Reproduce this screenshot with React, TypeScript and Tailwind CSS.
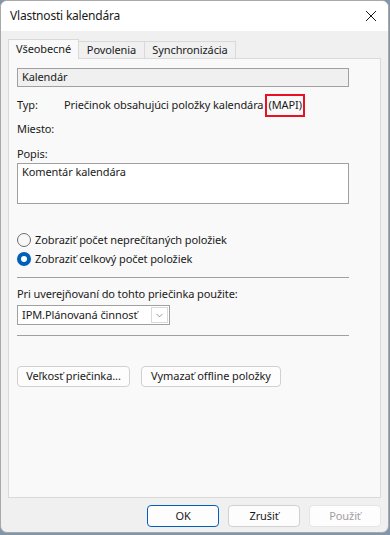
import { ChevronDown } from 'lucide-react'

const font = { fontFamily: '"Segoe UI", "Noto Sans", sans-serif' }

function Radio({ checked, label }: { checked?: boolean; label: string }) {
  return (
    <div className="flex items-center h-[18px]">
      {checked ? (
        <div className="w-[14px] h-[14px] rounded-full bg-[#005fb8] flex items-center justify-center">
          <div className="w-[6px] h-[6px] rounded-full bg-white" />
        </div>
      ) : (
        <div className="w-[14px] h-[14px] rounded-full border border-[#6e6e6e] bg-[#f7f7f7]" />
      )}
      <span className="ml-[4px]">{label}</span>
    </div>
  )
}

function Btn({ children, className = '' }: { children: React.ReactNode; className?: string }) {
  return (
    <div className={`h-[21px] flex items-center justify-center rounded-[4px] border bg-[#fdfdfd] ${className}`}>
      {children}
    </div>
  )
}

export default function App() {
  return (
    <div className="w-[390px] h-[535px] bg-[#8196ab] overflow-hidden text-[11px] tracking-[-0.1px] text-[#1a1a1a]" style={font}>
      <div className="w-[389px] h-[533px] rounded-[7px] border border-[#a8a8a8] bg-[#f0f0f0] overflow-hidden flex flex-col">
        {/* title bar */}
        <div className="h-[30px] bg-white flex items-center justify-between pl-[9px] pr-[10px] shrink-0">
          <span className="text-[12px] tracking-[-0.2px] text-[#1a1a1a]">Vlastnosti kalendára</span>
          <svg width="12" height="12" viewBox="0 0 12 12" className="mr-[1px]">
            <path d="M1 1 L11 11 M11 1 L1 11" stroke="#1a1a1a" strokeWidth="1" />
          </svg>
        </div>

        {/* tabs */}
        <div className="flex items-end px-[7px] mt-[7px] h-[20px] relative z-10">
          <div className="h-[20px] w-[71px] border border-b-0 border-[#d9d9d9] bg-[#f9f9f9] flex items-center pl-[7px] -mb-px pb-[1px]">
            Všeobecné
          </div>
          <div className="h-[17px] w-[66px] border border-b-0 border-l-0 border-[#d9d9d9] bg-[#f0f0f0] flex items-center justify-center">
            Povolenia
          </div>
          <div className="h-[17px] w-[91px] border border-b-0 border-l-0 border-[#d9d9d9] bg-[#f0f0f0] flex items-center justify-center">
            Synchronizácia
          </div>
        </div>

        {/* panel */}
        <div className="mx-[7px] h-[440px] border border-[#d9d9d9] bg-[#f9f9f9] px-[8px] pt-[9px] flex flex-col">
          <div className="w-[332px] h-[19px] border border-[#a0a0a0] bg-[#f0f0f0] flex items-center pl-[4px]">
            Kalendár
          </div>

          <div className="flex items-center mt-[7px] h-[23px]">
            <span className="w-[47px]">Typ:</span>
            <span>Priečinok obsahujúci položky kalendára</span>
            <span className="ml-[2px] border-2 border-[#e81123] px-[1px] h-[23px] flex items-center">(MAPI)</span>
          </div>

          <div className="mt-[3px] h-[18px] flex items-center">Miesto:</div>

          <div className="mt-[7px] h-[18px] flex items-center">Popis:</div>
          <div className="w-[332px] h-[41px] border border-[#a0a0a0] bg-white pl-[4px]">
            Komentár kalendára
          </div>

          <div className="mt-[27px] flex flex-col gap-[1px]">
            <Radio label="Zobraziť počet neprečítaných položiek" />
            <Radio checked label="Zobraziť celkový počet položiek" />
          </div>

          <div className="mt-[9px] w-[332px] h-px bg-[#a0a0a0]" />

          <div className="mt-[7px] h-[18px] flex items-center">Pri uverejňovaní do tohto priečinka použite:</div>
          <div className="mt-[2px] w-[153px] h-[20px] border border-[#a0a0a0] bg-white flex items-center justify-between">
            <span className="pl-[4px]">IPM.Plánovaná činnosť</span>
            <div className="w-[17px] h-[16px] border border-[#d9d9d9] mr-px flex items-center justify-center">
              <ChevronDown size={11} strokeWidth={1.3} color="#555" />
            </div>
          </div>

          <div className="mt-[10px] w-[332px] h-px bg-[#a0a0a0]" />

          <div className="mt-[30px] flex gap-[11px]">
            <Btn className="w-[113px] border-[#d0d0d0]">Veľkosť priečinka...</Btn>
            <Btn className="w-[140px] border-[#d0d0d0]">Vymazať offline položky</Btn>
          </div>
        </div>

        {/* bottom buttons */}
        <div className="flex justify-end gap-[9px] pr-[7px] mt-[7px]">
          <Btn className="w-[72px] h-[22px] border-[#005fb8]">OK</Btn>
          <Btn className="w-[72px] h-[22px] border-[#d0d0d0]">Zrušiť</Btn>
          <Btn className="w-[72px] h-[22px] border-[#e5e5e5] bg-[#f5f5f5] text-[#a0a0a0]">Použiť</Btn>
        </div>
      </div>
    </div>
  )
}
